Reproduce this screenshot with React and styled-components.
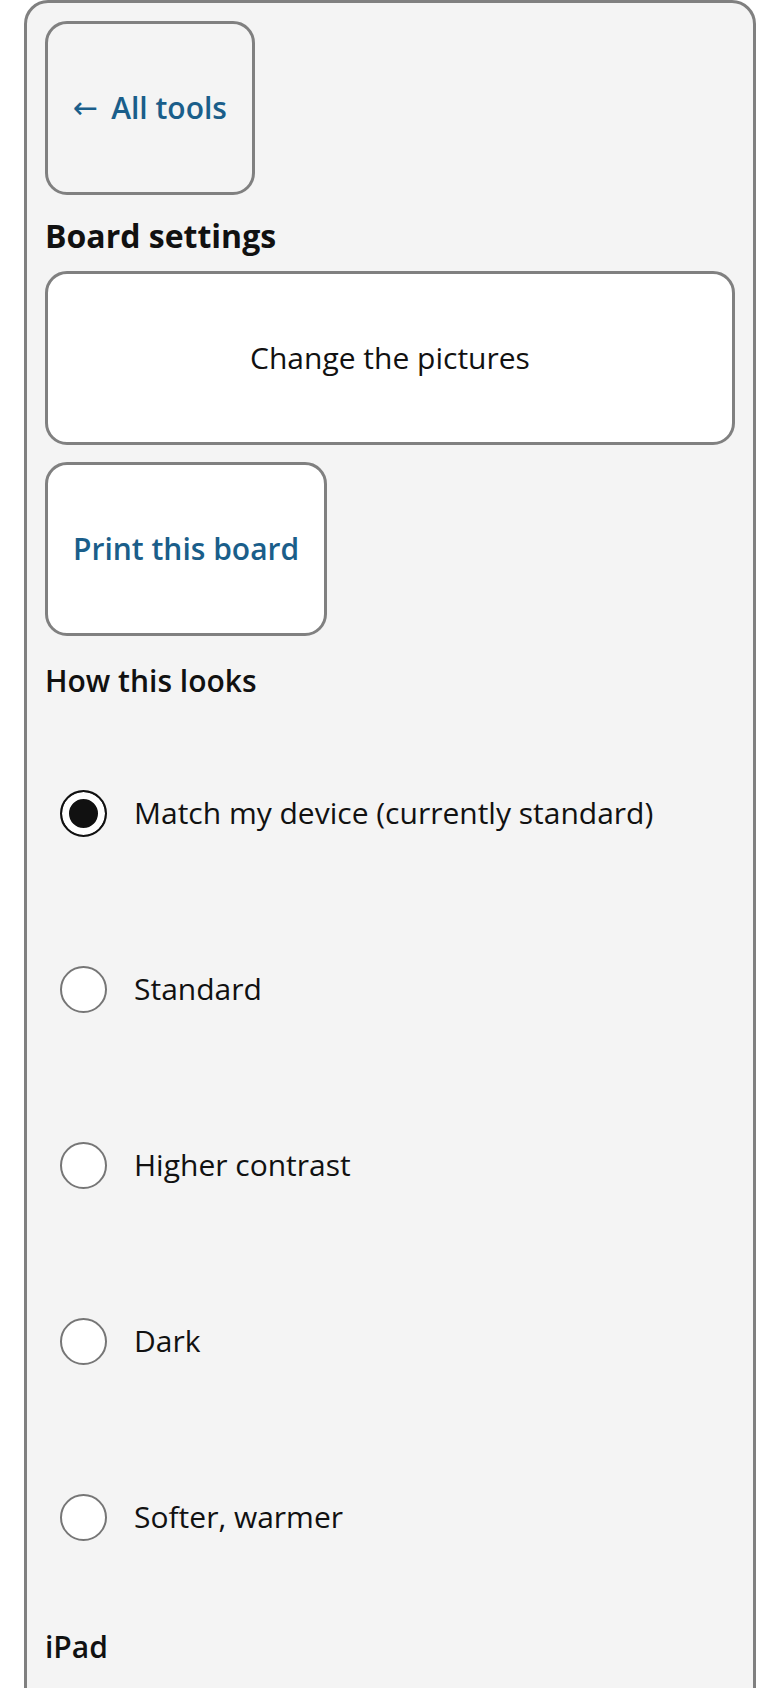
import React, { useState } from "react";
import styled, { createGlobalStyle } from "styled-components";

const GlobalStyle = createGlobalStyle`
  html, body {
    margin: 0;
    padding: 0;
    background: #ffffff;
  }
  body {
    font-family: "Open Sans", "Noto Sans", "Liberation Sans", sans-serif;
    color: #111111;
  }
  * { box-sizing: border-box; }
`;

const Viewport = styled.div`
  height: 1688px;
  overflow: hidden;
  padding: 0 24px;
`;

const Panel = styled.aside`
  min-height: 1760px;
  background: #f4f4f4;
  border: 3px solid #808080;
  border-radius: 24px;
  padding: 18px;
  display: flex;
  flex-direction: column;
  align-items: flex-start;
`;

const ToolButton = styled.button`
  font-family: inherit;
  font-size: 30px;
  font-weight: ${(p) => (p.$accent ? 600 : 400)};
  color: ${(p) => (p.$accent ? "#1a5e8a" : "#111111")};
  background: ${(p) => (p.$plain ? "transparent" : "#ffffff")};
  border: 3px solid #808080;
  border-radius: 22px;
  min-height: 174px;
  padding: 0 25px;
  display: inline-flex;
  align-items: center;
  justify-content: center;
  align-self: ${(p) => (p.$wide ? "stretch" : "flex-start")};
  margin-top: ${(p) => p.$gap || 0}px;
  cursor: pointer;
  line-height: 40px;
`;

const Arrow = styled.span`
  font-family: "DejaVu Sans", sans-serif;
  font-weight: 400;
  margin-right: 13px;
`;

const SectionTitle = styled.h2`
  margin: 21px 0 0;
  font-size: 32px;
  font-weight: 700;
  line-height: 40px;
  color: #111111;
`;

const GroupTitle = styled.h3`
  margin: ${(p) => p.$top}px 0 0;
  font-size: 30px;
  font-weight: 600;
  line-height: 40px;
  color: #111111;
`;

const Options = styled.div`
  margin-top: 24px;
  display: flex;
  flex-direction: column;
  align-self: stretch;
`;

const OptionRow = styled.label`
  height: 176px;
  display: flex;
  align-items: center;
  gap: 27px;
  padding-left: 15px;
  font-size: 30px;
  line-height: 40px;
  cursor: pointer;
`;

const RadioDot = styled.input.attrs({ type: "radio" })`
  appearance: none;
  margin: 0;
  flex: none;
  width: 47px;
  height: 47px;
  border-radius: 50%;
  border: 2px solid ${(p) => (p.checked ? "#111111" : "#767676")};
  background: ${(p) => (p.checked ? "#111111" : "#ffffff")};
  box-shadow: ${(p) => (p.checked ? "inset 0 0 0 7px #ffffff" : "none")};
`;

const looks = [
  "Match my device (currently standard)",
  "Standard",
  "Higher contrast",
  "Dark",
  "Softer, warmer",
];

export default function App() {
  const [look, setLook] = useState(looks[0]);
  return (
    <>
      <GlobalStyle />
      <Viewport>
        <Panel>
          <ToolButton $accent $plain>
            <Arrow>←</Arrow>All tools
          </ToolButton>
          <SectionTitle>Board settings</SectionTitle>
          <ToolButton $wide $gap={15}>Change the pictures</ToolButton>
          <ToolButton $accent $gap={17}>Print this board</ToolButton>
          <GroupTitle $top={25}>How this looks</GroupTitle>
          <Options role="radiogroup">
            {looks.map((name) => (
              <OptionRow key={name}>
                <RadioDot
                  name="look"
                  checked={look === name}
                  onChange={() => setLook(name)}
                />
                {name}
              </OptionRow>
            ))}
          </Options>
          <GroupTitle $top={22}>iPad</GroupTitle>
        </Panel>
      </Viewport>
    </>
  );
}
